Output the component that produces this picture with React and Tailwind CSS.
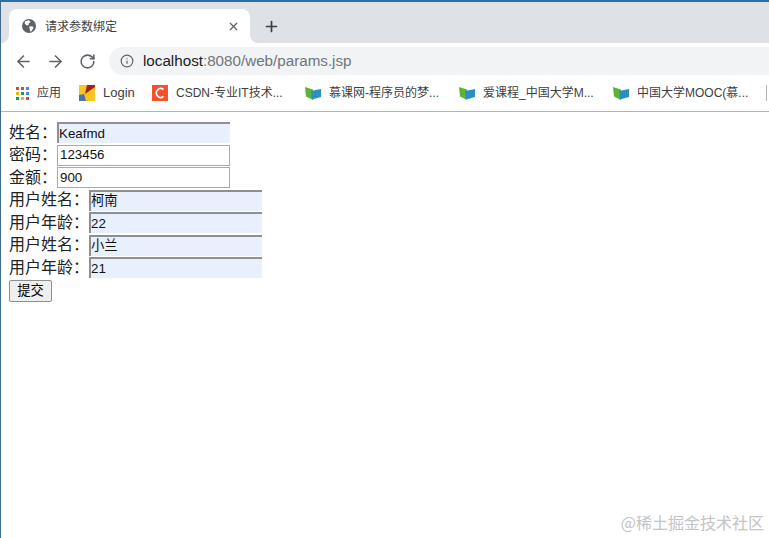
import React from "react";
import { ArrowLeft, ArrowRight, RotateCw, Plus, X, Info } from "lucide-react";

const cjk = "font-['Liberation_Sans','Noto_Sans_CJK_SC',sans-serif]";

function Globe() {
  return (
    <svg width="14" height="14" viewBox="0 0 14 14" className="shrink-0">
      <circle cx="7" cy="7" r="7" fill="#5f6368" />
      <path d="M3 2.2 L7 1.2 L8.6 3 L6.6 4.4 L6.8 6 L4.6 6.4 L2.6 4.6 Z" fill="#fff" />
      <path d="M7.2 7.6 L10.6 7.2 L11.6 9 L9.4 12.2 L8.2 12.4 L7.6 9.6 Z" fill="#fff" />
    </svg>
  );
}

function Apps() {
  const c = ["#db4437", "#db4437", "#4285f4", "#f4b400", "#0f9d58", "#4285f4", "#0f9d58", "#f4b400", "#db4437"];
  return (
    <div className="grid grid-cols-3 gap-[2px] w-[13px] shrink-0">
      {c.map((x, i) => (
        <div key={i} className="w-[3px] h-[3px]" style={{ background: x }} />
      ))}
    </div>
  );
}

function LoginIcon() {
  return (
    <svg width="16" height="16" viewBox="0 0 16 16" className="shrink-0">
      <rect width="16" height="16" fill="#f7c51e" />
      <path d="M8 0 H16 V2 L6 9 Z" fill="#a3201f" />
      <path d="M0 10 L5 9 L7 16 H0 Z" fill="#4a6fb5" />
    </svg>
  );
}

function CsdnIcon() {
  return (
    <svg width="16" height="16" viewBox="0 0 16 16" className="shrink-0">
      <rect width="16" height="16" fill="#f0532d" />
      <path d="M11.5 4.5 A4.4 4.4 0 1 0 11.5 11.5" fill="none" stroke="#fff" strokeWidth="1.6" />
    </svg>
  );
}

function BookIcon() {
  return (
    <svg width="16" height="13" viewBox="0 0 16 13" className="shrink-0">
      <path d="M0 0 L8 2.5 V13 L1 9.5 Z" fill="#5cb531" />
      <path d="M6 4 L16 2 V10 L7 12.5 Z" fill="#2b8fc4" />
    </svg>
  );
}

function Flare({ right }) {
  return (
    <svg width="8" height="8" viewBox="0 0 8 8" className={"absolute bottom-0 " + (right ? "left-full" : "right-full rotate-y-180")}>
      <path d="M0 0 A8 8 0 0 0 8 8 H0 Z" fill="#fff" />
    </svg>
  );
}

function Bookmark({ icon, label, w, text = "text-[12px]" }) {
  return (
    <div className={"flex items-center gap-[8px] shrink-0 " + w}>
      {icon}
      <span className={text + " text-[#3c4043] whitespace-nowrap"}>{label}</span>
    </div>
  );
}

function Field({ label, value, wide, filled }) {
  const box = filled
    ? "border-t-2 border-l-2 border-r-0 border-b-0 border-t-[#8f8f8f] border-l-[#8f8f8f] bg-[#e8f0fe]"
    : "border border-[#a9a9a9] bg-white pl-[2px]";
  return (
    <div className="flex items-center h-[22.5px]">
      <span className={"text-[16px] text-[#222] whitespace-nowrap shrink-0 " + (wide ? "w-[80px]" : "w-[48px]")}>
        {label}
      </span>
      <div className={"w-[173px] h-[21px] flex items-center text-[13.33px] text-[#111] " + box}>{value}</div>
    </div>
  );
}

export default function App() {
  return (
    <div className={"w-[769px] h-[538px] relative overflow-hidden bg-white border-l border-l-[#3d6a8f] flex flex-col " + cjk}>
      <div className="h-[1.5px] bg-[#2a6fa8] shrink-0" />
      <div className="h-[41.5px] bg-[#dee1e6] flex items-end pl-[8px] shrink-0">
        <div className="relative w-[241px] h-[34px] bg-white rounded-t-[8px] flex items-center pl-[13px] pr-[10px]">
          <Flare />
          <Globe />
          <span className="ml-[9px] mt-[1px] text-[12px] text-[#3c4043] whitespace-nowrap">请求参数绑定</span>
          <X size={13} strokeWidth={2.4} color="#5f6368" className="ml-auto" />
          <Flare right />
        </div>
        <div className="h-[34px] flex items-center ml-[13px]">
          <Plus size={17} strokeWidth={2.4} color="#3c4043" />
        </div>
      </div>
      <div className="h-[32px] flex items-end pl-[13px] shrink-0 bg-white">
        <div className="h-[28px] flex items-center">
          <ArrowLeft size={19} strokeWidth={2} color="#5f6368" />
          <ArrowRight size={19} strokeWidth={2} color="#5f6368" className="ml-[13px]" />
          <RotateCw size={17} strokeWidth={2.2} color="#5f6368" className="ml-[14px]" />
        </div>
        <div className="ml-[13px] flex-1 h-[28px] bg-[#f1f3f4] rounded-l-[14px] flex items-center pl-[11px]">
          <Info size={14} strokeWidth={2} color="#5f6368" />
          <span className="ml-[9px] text-[15.2px] text-[#202124]">localhost</span>
          <span className="text-[15.2px] text-[#70757a]">:8080/web/params.jsp</span>
        </div>
      </div>
      <div className="h-[37px] flex items-center pl-[15px] border-b border-b-[#b4b4b4] shrink-0 overflow-hidden">
        <Bookmark icon={<Apps />} label="应用" w="w-[63px]" />
        <Bookmark icon={<LoginIcon />} label="Login" w="w-[73px]" text="text-[13px]" />
        <Bookmark icon={<CsdnIcon />} label="CSDN-专业IT技术..." w="w-[153px]" />
        <Bookmark icon={<BookIcon />} label="慕课网-程序员的梦..." w="w-[154px]" />
        <Bookmark icon={<BookIcon />} label="爱课程_中国大学M..." w="w-[154px]" />
        <Bookmark icon={<BookIcon />} label="中国大学MOOC(慕..." w="w-[153px]" />
        <div className="w-px h-[16px] bg-[#b4b4b4] shrink-0" />
      </div>
      <div className="pt-[9.5px] pl-[8px] flex flex-col">
        <Field label="姓名：" value="Keafmd" filled />
        <Field label="密码：" value="123456" />
        <Field label="金额：" value="900" />
        <Field label="用户姓名：" value="柯南" wide filled />
        <Field label="用户年龄：" value="22" wide filled />
        <Field label="用户姓名：" value="小兰" wide filled />
        <Field label="用户年龄：" value="21" wide filled />
        <button className="mt-[1px] w-[43px] h-[22px] bg-[#efefef] border border-[#8f8f8f] rounded-[2px] text-[13.33px] text-black flex items-center justify-center">
          提交
        </button>
      </div>
      <div className="absolute right-[5px] bottom-[4px] text-[16px] text-[#c4c4c4] font-['Noto_Sans_CJK_SC',sans-serif] whitespace-nowrap">
        @稀土掘金技术社区
      </div>
    </div>
  );
}
